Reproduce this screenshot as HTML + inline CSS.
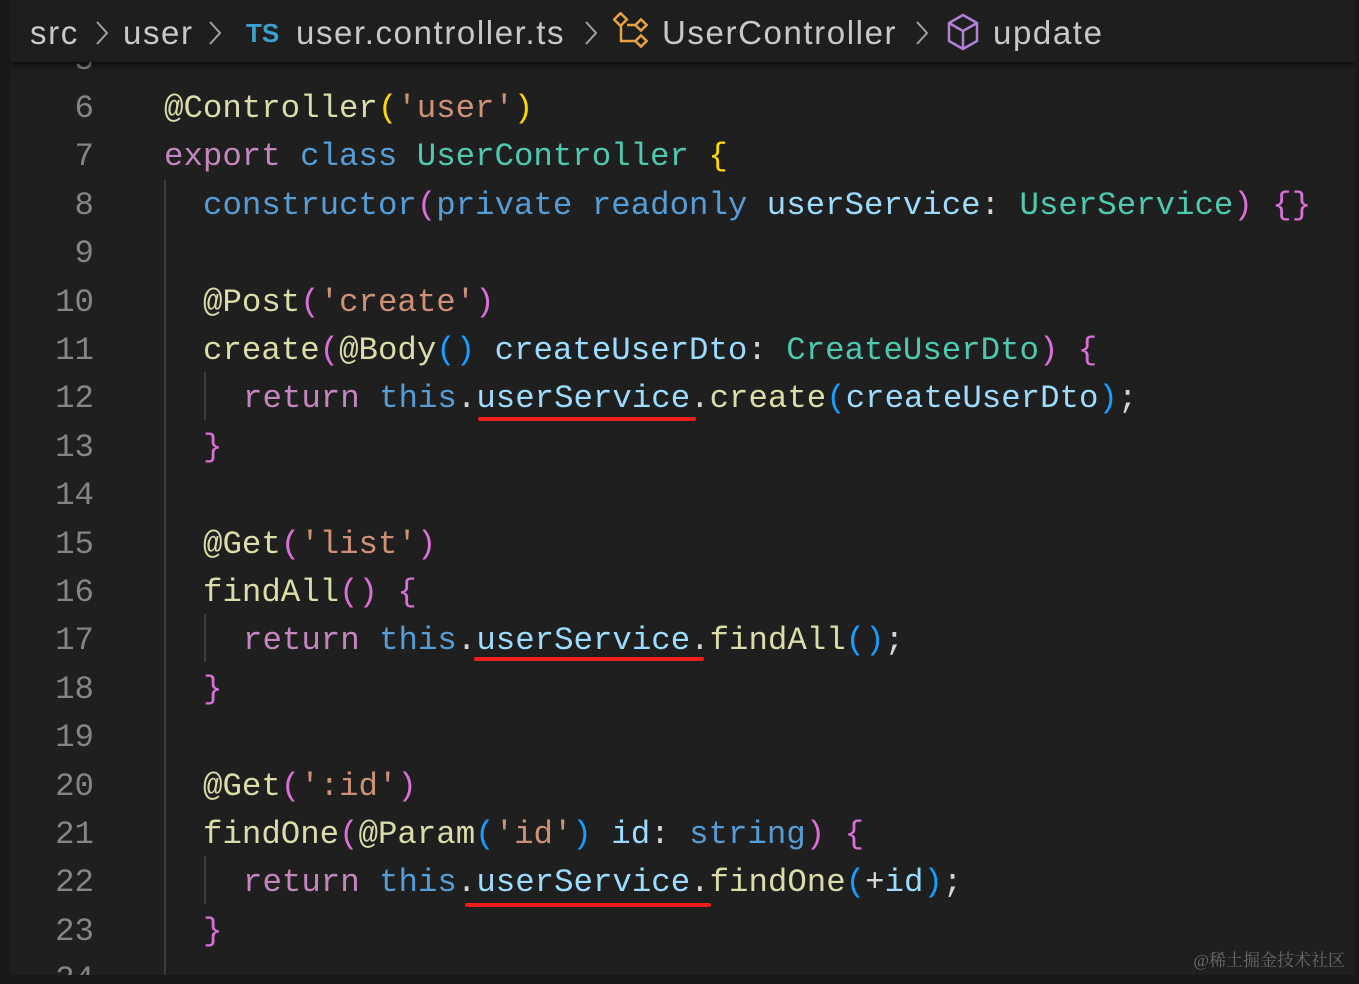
<!DOCTYPE html>
<html><head><meta charset="utf-8"><style>
html,body{margin:0;padding:0;width:1359px;height:984px;background:#181818;overflow:hidden}
#ed{position:absolute;left:10px;top:0;width:1345px;height:975px;background:#1f1f1f;overflow:hidden}
#bc{position:absolute;left:0;top:0;width:1345px;height:62px;background:#1e1e1e;box-shadow:0 3px 6px #000a;z-index:2;font-family:"Liberation Sans",sans-serif;font-size:33px;letter-spacing:1.6px;color:#c8c8c8;line-height:66px;white-space:nowrap}
.ch{position:absolute;top:18px}
.ln{position:absolute;left:0;width:84px;text-align:right;color:#858585}
.l{position:absolute;white-space:pre}
.code{position:absolute;left:0;top:3px;width:100%;height:100%;font-family:"Liberation Mono","DejaVu Sans Mono",monospace;font-size:32.4px;line-height:48px}
.k{color:#c586c0}.b{color:#569cd6}.t{color:#4ec9b0}.f{color:#dcdcaa}.s{color:#ce9178}.v{color:#9cdcfe}.w{color:#d4d4d4}
.y{color:#ffd700}.p{color:#da70d6}.c{color:#179fff}
.g{position:absolute;width:2px;background:#3c3c3c}
.u{position:absolute;height:4px;background:#f01d1d;border-radius:2px}
</style></head><body><div id="ed">
<div id="bc"><span style="position:absolute;left:20px">src</span>
<svg class="ch" style="left:84px" width="16" height="30" viewBox="0 0 16 30"><path d="M3 4l10 11L3 26" fill="none" stroke="#a0a0a0" stroke-width="2"/></svg>
<span style="position:absolute;left:113px">user</span>
<svg class="ch" style="left:197px" width="16" height="30" viewBox="0 0 16 30"><path d="M3 4l10 11L3 26" fill="none" stroke="#a0a0a0" stroke-width="2"/></svg>
<span style="position:absolute;left:236px;color:#3d9fcf;font-weight:bold;font-size:26px;letter-spacing:0">TS</span><span style="position:absolute;left:286px">user.controller.ts</span>
<svg class="ch" style="left:573px" width="16" height="30" viewBox="0 0 16 30"><path d="M3 4l10 11L3 26" fill="none" stroke="#a0a0a0" stroke-width="2"/></svg>
<svg style="position:absolute;left:603px;top:12px" width="38" height="38" viewBox="0 0 38 38" fill="none" stroke="#e8a33d" stroke-width="2.5"><rect x="3" y="3" width="9" height="9" transform="rotate(45 7.5 7.5)"/><path d="M8 13v16h14M14 13h8"/><rect x="24" y="9" width="8" height="8" transform="rotate(45 28 13)"/><rect x="24" y="25" width="8" height="8" transform="rotate(45 28 29)"/></svg>
<span style="position:absolute;left:652px">UserController</span>
<svg class="ch" style="left:904px" width="16" height="30" viewBox="0 0 16 30"><path d="M3 4l10 11L3 26" fill="none" stroke="#a0a0a0" stroke-width="2"/></svg>
<svg style="position:absolute;left:936px;top:13px" width="34" height="38" viewBox="0 0 34 38" fill="none" stroke="#b180d7" stroke-width="2.5" stroke-linejoin="round"><path d="M17 2L31 10V28L17 36L3 28V10Z M3 10L17 18L31 10 M17 18V36"/></svg>
<span style="position:absolute;left:983px">update</span></div>
<div class="code">
<div class="g" style="left:154px;top:177px;height:800px"></div>
<div class="g" style="left:194px;top:369px;height:48px"></div>
<div class="g" style="left:194px;top:611px;height:48px"></div>
<div class="g" style="left:194px;top:853px;height:48px"></div>
<div class="ln l" style="top:34px">5</div>
<div class="ln l" style="top:82px">6</div><div class="l" style="left:154px;top:82px"><span class="f">@Controller</span><span class="y">(</span><span class="s">'user'</span><span class="y">)</span></div>
<div class="ln l" style="top:130px">7</div><div class="l" style="left:154px;top:130px"><span class="k">export</span> <span class="b">class</span> <span class="t">UserController</span> <span class="y">{</span></div>
<div class="ln l" style="top:179px">8</div><div class="l" style="left:193px;top:179px"><span class="b">constructor</span><span class="p">(</span><span class="b">private</span> <span class="b">readonly</span> <span class="v">userService</span><span class="w">:</span> <span class="t">UserService</span><span class="p">)</span> <span class="p">{}</span></div>
<div class="ln l" style="top:227px">9</div>
<div class="ln l" style="top:276px">10</div><div class="l" style="left:193px;top:276px"><span class="f">@Post</span><span class="p">(</span><span class="s">'create'</span><span class="p">)</span></div>
<div class="ln l" style="top:324px">11</div><div class="l" style="left:193px;top:324px"><span class="f">create</span><span class="p">(</span><span class="f">@Body</span><span class="c">()</span> <span class="v">createUserDto</span><span class="w">:</span> <span class="t">CreateUserDto</span><span class="p">)</span> <span class="p">{</span></div>
<div class="ln l" style="top:372px">12</div><div class="l" style="left:233px;top:372px"><span class="k">return</span> <span class="b">this</span><span class="w">.</span><span class="v">userService</span><span class="w">.</span><span class="f">create</span><span class="c">(</span><span class="v">createUserDto</span><span class="c">)</span><span class="w">;</span></div>
<div class="ln l" style="top:421px">13</div><div class="l" style="left:193px;top:421px"><span class="p">}</span></div>
<div class="ln l" style="top:469px">14</div>
<div class="ln l" style="top:518px">15</div><div class="l" style="left:193px;top:518px"><span class="f">@Get</span><span class="p">(</span><span class="s">'list'</span><span class="p">)</span></div>
<div class="ln l" style="top:566px">16</div><div class="l" style="left:193px;top:566px"><span class="f">findAll</span><span class="p">()</span> <span class="p">{</span></div>
<div class="ln l" style="top:614px">17</div><div class="l" style="left:233px;top:614px"><span class="k">return</span> <span class="b">this</span><span class="w">.</span><span class="v">userService</span><span class="w">.</span><span class="f">findAll</span><span class="c">()</span><span class="w">;</span></div>
<div class="ln l" style="top:663px">18</div><div class="l" style="left:193px;top:663px"><span class="p">}</span></div>
<div class="ln l" style="top:711px">19</div>
<div class="ln l" style="top:760px">20</div><div class="l" style="left:193px;top:760px"><span class="f">@Get</span><span class="p">(</span><span class="s">':id'</span><span class="p">)</span></div>
<div class="ln l" style="top:808px">21</div><div class="l" style="left:193px;top:808px"><span class="f">findOne</span><span class="p">(</span><span class="f">@Param</span><span class="c">(</span><span class="s">'id'</span><span class="c">)</span> <span class="v">id</span><span class="w">:</span> <span class="b">string</span><span class="p">)</span> <span class="p">{</span></div>
<div class="ln l" style="top:856px">22</div><div class="l" style="left:233px;top:856px"><span class="k">return</span> <span class="b">this</span><span class="w">.</span><span class="v">userService</span><span class="w">.</span><span class="f">findOne</span><span class="c">(</span><span class="w">+</span><span class="v">id</span><span class="c">)</span><span class="w">;</span></div>
<div class="ln l" style="top:905px">23</div><div class="l" style="left:193px;top:905px"><span class="p">}</span></div>
<div class="ln l" style="top:953px">24</div>
</div>
<div class="u" style="left:468px;top:417px;width:218px"></div>
<div class="u" style="left:464px;top:657px;width:230px"></div>
<div class="u" style="left:455px;top:903px;width:246px"></div>
<div style="position:absolute;right:10px;top:946px;font-family:'Liberation Serif','Noto Serif CJK SC',serif;font-size:17px;color:#6a6a6a">@稀土掘金技术社区</div>
</div></body></html>
